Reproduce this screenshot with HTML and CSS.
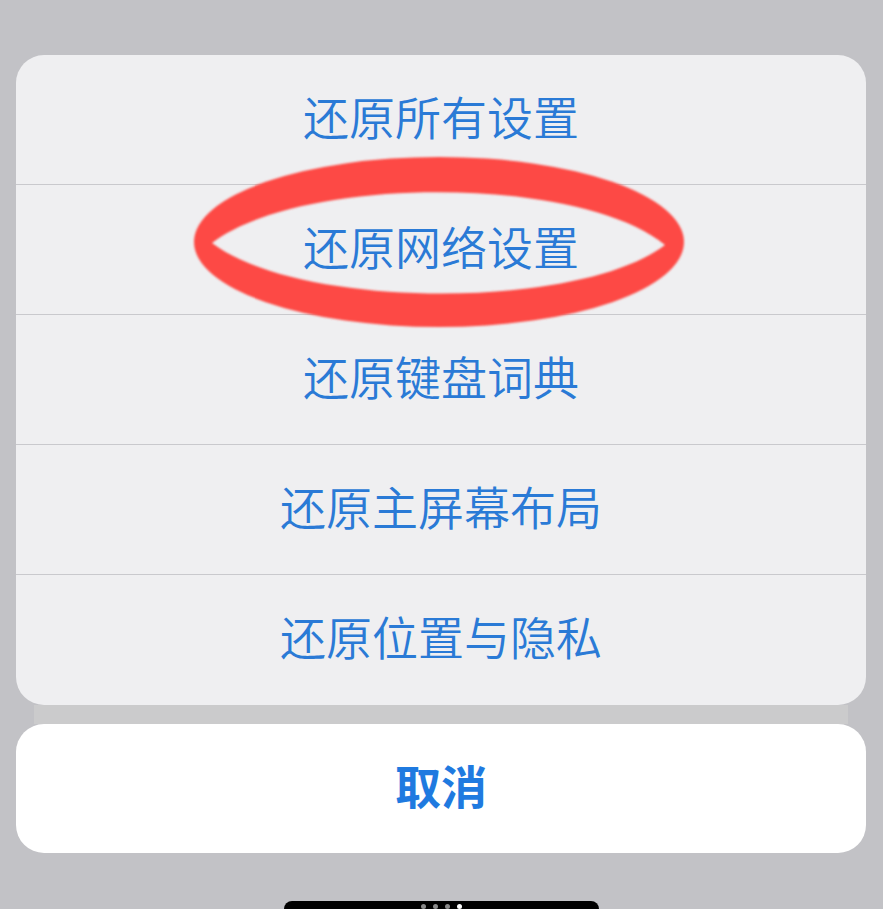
FILE: index.html
```html
<!DOCTYPE html>
<html>
<head>
	<meta charset="utf-8">
	<title>还原</title>
	<link rel="stylesheet" href="styles.css">
</head>
<body>
	<div class="screen">
		<div class="sheet">
			<div class="option">还原所有设置</div>
			<div class="option">还原网络设置</div>
			<div class="option">还原键盘词典</div>
			<div class="option">还原主屏幕布局</div>
			<div class="option">还原位置与隐私</div>
		</div>
		<div class="strip"></div>
		<div class="cancel">取消</div>

		<div class="home-bar">
			<span class="dot"></span>
			<span class="dot"></span>
			<span class="dot"></span>
			<span class="dot on"></span>
		</div>

		<!-- hand drawn marker ring -->
		<svg class="marker" width="883" height="909" viewBox="0 0 883 909">
			<defs>
				<filter id="soft" x="-5%" y="-5%" width="110%" height="110%">
					<feGaussianBlur stdDeviation="1.1"/>
				</filter>
			</defs>
			<path fill="#fd4a45" fill-rule="evenodd" filter="url(#soft)"
				d="M194,242 A245,85 0 1,0 684,242 A245,85 0 1,0 194,242 Z
				   M212,243 C300,175 580,175 665,245 C580,310 300,310 212,243 Z"/>
		</svg>
	</div>
</body>
</html>
```

FILE: styles.css
```css
/* general */
		html, body {
			margin: 0;
			height: 100%;
		}
		body {
			background-color: #c2c2c6;
			font-family: "Noto Sans CJK SC", "Noto Sans", sans-serif;
			overflow: hidden;
		}
		.screen {
			position: relative;
			width: 883px;
			height: 909px;
			padding-top: 55px;
			box-sizing: border-box;
		}
/* action sheet */
		.sheet {
			width: 850px;
			margin-left: 16px;
			background-color: #efeff1;
			border-radius: 28px;
			overflow: hidden;
		}
		.option {
			height: 129px;
			box-sizing: border-box;
			padding-bottom: 10px;
			display: flex;
			align-items: center;
			justify-content: center;
			font-size: 46px;
			font-weight: 350;
			color: #2a7ad6;
			border-top: 1px solid #c9c9cd;
		}
		.option:first-child {
			border-top: none;
		}
		.option + .option {
			height: 130px;
		}
		.option:last-child {
			height: 131px;
		}
		.strip {
			height: 19px;
			margin: 0 35px 0 34px;
			background-color: #cbcbcc;
		}
		.cancel {
			width: 850px;
			height: 129px;
			box-sizing: border-box;
			padding-bottom: 10px;
			margin-left: 16px;
			background-color: #fff;
			border-radius: 28px;
			display: flex;
			align-items: center;
			justify-content: center;
			font-size: 46px;
			font-weight: bold;
			color: #1f7ae0;
		}
/* home indicator */
		.home-bar {
			position: absolute;
			left: 284px;
			top: 901px;
			width: 315px;
			height: 12px;
			background-color: #000;
			border-radius: 8px 8px 0 0;
			display: flex;
			justify-content: center;
			gap: 7px;
			padding-top: 3px;
			box-sizing: border-box;
		}
		.dot {
			width: 5px;
			height: 5px;
			border-radius: 50%;
			background-color: #8a8a8a;
		}
		.dot.on {
			background-color: #fff;
		}
/* overlay */
		.marker {
			position: absolute;
			left: 0;
			top: 0;
			pointer-events: none;
		}
```
